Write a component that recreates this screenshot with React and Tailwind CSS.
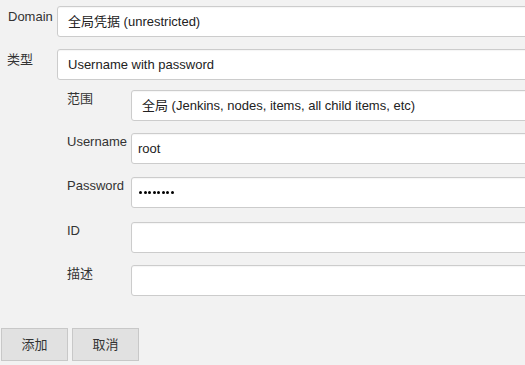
const NESTED = [
  { label: '范围', top: 'mt-[10px]', value: '全局 (Jenkins, nodes, items, all child items, etc)', select: true },
  { label: 'Username', top: 'mt-[12px]', value: 'root' },
  { label: 'Password', top: 'mt-[13px]', password: true },
  { label: 'ID', top: 'mt-[14px]', value: '' },
  { label: '描述', top: 'mt-[12px]', value: '' },
];

function Box({ children, select, className = '' }) {
  return (
    <div
      className={`h-[31px] w-[520px] shrink-0 rounded-[3px] border border-[#cccccc] bg-white shadow-[inset_0_1px_1px_rgba(0,0,0,0.04)] flex items-center text-[13px] text-[#222] ${select ? 'pl-[10px]' : 'pl-[6px]'} ${className}`}
    >
      {children}
    </div>
  );
}

function PasswordDots({ count = 8 }) {
  return (
    <div className="flex items-center gap-[1.5px] pl-px">
      {Array.from({ length: count }).map((_, i) => (
        <span key={i} className="block w-[3px] h-[3px] rounded-full bg-black" />
      ))}
    </div>
  );
}

export default function App() {
  return (
    <div className="w-[525px] h-[365px] overflow-hidden bg-[#f2f2f2] text-[#333] font-['Liberation_Sans','Noto_Sans_CJK_SC',sans-serif] text-[13px]">
      <div className="pt-[6px]">
        {/* Domain */}
        <div className="flex">
          <div className="w-[57px] shrink-0 pl-[8px] pt-[3px] leading-[16px]">Domain</div>
          <Box select>全局凭据 (unrestricted)</Box>
        </div>

        {/* 类型 */}
        <div className="flex mt-[12px]">
          <div className="w-[57px] shrink-0 pl-[7px] pt-[3px] leading-[16px]">类型</div>
          <Box select>Username with password</Box>
        </div>

        {/* nested credential fields */}
        <div>
          {NESTED.map((f) => (
            <div key={f.label} className={`flex ${f.top}`}>
              <div className="w-[131px] shrink-0 pl-[67px] pt-[1px] leading-[16px] whitespace-nowrap">{f.label}</div>
              <Box select={f.select} className={f.select ? 'h-[30px]' : ''}>
                {f.password ? <PasswordDots /> : f.value}
              </Box>
            </div>
          ))}
        </div>

        <div className="flex gap-[4px] mt-[32px] pl-px">
          <button className="w-[67px] h-[33px] border border-[#c8c8c8] bg-[#e1e1e1] text-[13px] text-[#333]">
            添加
          </button>
          <button className="w-[67px] h-[33px] border border-[#c8c8c8] bg-[#e1e1e1] text-[13px] text-[#333]">
            取消
          </button>
        </div>
      </div>
    </div>
  );
}
